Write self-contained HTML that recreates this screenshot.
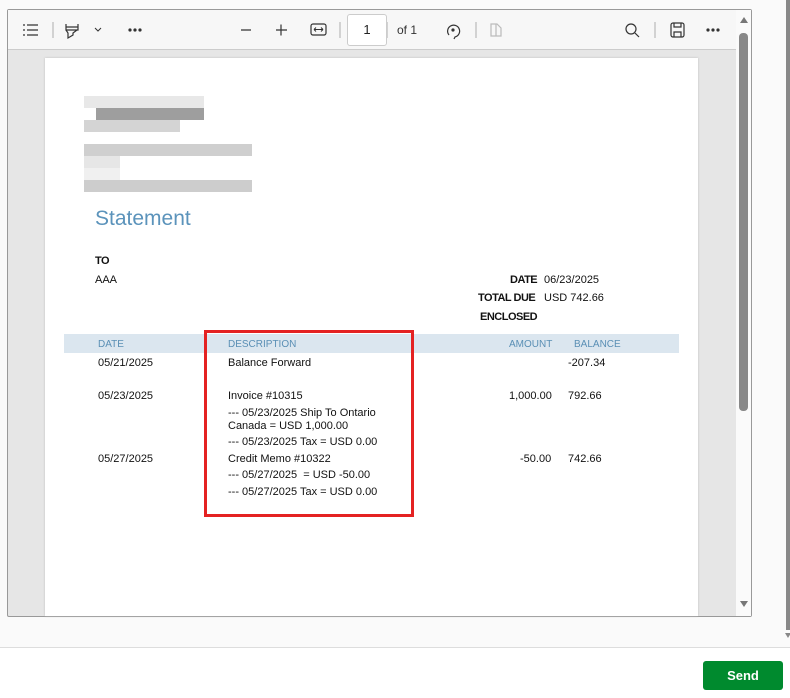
<!DOCTYPE html>
<html><head><meta charset="utf-8"><style>
*{margin:0;padding:0;box-sizing:border-box}
body{width:790px;height:698px;background:#fff;position:relative;overflow:hidden;font-family:"Liberation Sans",Arial,sans-serif}
.a{position:absolute}
.t{position:absolute;font-size:11px;color:#111;white-space:nowrap}
.b{font-weight:bold;letter-spacing:-0.5px}
.h{color:#5a8fb5;font-size:10px}
.px{position:absolute;height:12px}
.ic{position:absolute;color:#333}
</style></head><body>
<div class="a" style="left:0;top:0;width:790px;height:648px;background:#fafafa"></div>
<div class="a" style="left:0;top:647px;width:790px;height:1px;background:#ddd"></div>
<div class="a" style="left:786px;top:0;width:4px;height:630px;background:#888"></div>
<div class="a" style="left:785px;top:633px;width:0;height:0;border-left:3px solid transparent;border-right:3px solid transparent;border-top:5px solid #888"></div>
<!-- viewer frame -->
<div class="a" style="left:7px;top:9px;width:745px;height:608px;border:1px solid #999;background:#e6e6e6;border-radius:2px"></div>
<div class="a" style="left:8px;top:10px;width:728px;height:40px;background:#f7f7f7;border-bottom:1px solid #ccc"></div>
<div class="a" style="left:736px;top:10px;width:15px;height:606px;background:#fafafa"></div>
<div class="a" style="left:739px;top:33px;width:9px;height:378px;background:#888;border-radius:4px"></div>
<div class="a" style="left:740px;top:17px;border-left:4px solid transparent;border-right:4px solid transparent;border-bottom:6px solid #777"></div>
<div class="a" style="left:740px;top:601px;border-left:4px solid transparent;border-right:4px solid transparent;border-top:6px solid #777"></div>
<!-- toolbar -->
<svg class="a" style="left:0;top:10px" width="736" height="40" fill="none" stroke="#333" stroke-width="1.2">
<path d="M23 15h2M27 15h11M23 20h2M27 20h11M23 25h2M27 25h11"/>
<path d="M53 12v16M340 12v16M387 12v16M476 12v16M655 12v16" stroke="#bbb"/>
<path d="M66 14v6h12v-6M66 20l2 3v5l5-3v-2l4-3M66 17h12"/>
<path d="M95 18l3 3 3-3" stroke-width="1"/>
<circle cx="130" cy="20" r="1" fill="#333"/><circle cx="135" cy="20" r="1" fill="#333"/><circle cx="140" cy="20" r="1" fill="#333"/>
<path d="M241 20h10M276 20h11M281 14.5v11"/>
<rect x="311" y="14" width="15" height="11" rx="2"/><path d="M314 19.5h9M314 19.5l2-2M314 19.5l2 2M323 19.5l-2-2M323 19.5l-2 2" stroke-width="1"/>
<path d="M449 25a6 6 0 1 1 6 2l-1 2" /><circle cx="453" cy="20" r="1" fill="#333"/>
<path d="M491 14h6l4 4v8h-10zM496 14v12" stroke="#bbb"/>
<circle cx="631" cy="19" r="5"/><path d="M635 23l4 4"/>
<rect x="671" y="13" width="13" height="14" rx="2"/><path d="M674 13v4h7v-4M674 27v-5h7v5"/>
<circle cx="708" cy="20" r="1" fill="#333"/><circle cx="713" cy="20" r="1" fill="#333"/><circle cx="718" cy="20" r="1" fill="#333"/>
</svg>
<div class="a" style="left:347px;top:14px;width:40px;height:32px;background:#fff;border:1px solid #ccc;border-radius:3px;font-size:13px;text-align:center;line-height:30px;color:#222">1</div>
<div class="t" style="left:397px;top:23px;font-size:12px;color:#333">of 1</div>
<!-- page -->
<div class="a" style="left:45px;top:58px;width:653px;height:558px;background:#fff;box-shadow:0 0 2px #bbb"></div>
<!-- pixelated logo -->
<div class="px" style="left:84px;top:96px;width:120px;background:#e8e8e8"></div>
<div class="px" style="left:96px;top:108px;width:108px;background:#9e9e9e"></div>
<div class="px" style="left:84px;top:120px;width:96px;background:#d4d4d4"></div>
<div class="px" style="left:84px;top:144px;width:168px;background:#cfcfcf"></div>
<div class="px" style="left:84px;top:156px;width:36px;background:#e6e6e6"></div>
<div class="px" style="left:84px;top:168px;width:36px;background:#f0f0f0"></div>
<div class="px" style="left:84px;top:180px;width:168px;background:#cdcdcd"></div>
<div class="t" style="left:95px;top:207px;font-size:21px;color:#5b93bb">Statement</div>
<div class="t b" style="left:95px;top:255px">TO</div>
<div class="t" style="left:95px;top:274px">AAA</div>
<div class="t b" style="left:510px;top:274px">DATE</div><div class="t" style="left:544px;top:274px">06/23/2025</div>
<div class="t b" style="left:478px;top:292px">TOTAL DUE</div><div class="t" style="left:544px;top:292px">USD 742.66</div>
<div class="t b" style="left:480px;top:311px">ENCLOSED</div>
<div class="a" style="left:64px;top:334px;width:615px;height:19px;background:#dbe6ef"></div>
<div class="t h" style="left:98px;top:339px">DATE</div>
<div class="t h" style="left:228px;top:339px">DESCRIPTION</div>
<div class="t h" style="left:509px;top:339px">AMOUNT</div>
<div class="t h" style="left:574px;top:339px">BALANCE</div>
<div class="t" style="left:98px;top:357px">05/21/2025</div>
<div class="t" style="left:228px;top:357px">Balance Forward</div>
<div class="t" style="left:568px;top:357px">-207.34</div>
<div class="t" style="left:98px;top:390px">05/23/2025</div>
<div class="t" style="left:228px;top:390px">Invoice #10315</div>
<div class="t" style="left:509px;top:390px">1,000.00</div>
<div class="t" style="left:568px;top:390px">792.66</div>
<div class="t" style="left:228px;top:407px">--- 05/23/2025 Ship To Ontario</div>
<div class="t" style="left:228px;top:420px">Canada = USD 1,000.00</div>
<div class="t" style="left:228px;top:436px">--- 05/23/2025 Tax = USD 0.00</div>
<div class="t" style="left:98px;top:453px">05/27/2025</div>
<div class="t" style="left:228px;top:453px">Credit Memo #10322</div>
<div class="t" style="left:520px;top:453px">-50.00</div>
<div class="t" style="left:568px;top:453px">742.66</div>
<div class="t" style="left:228px;top:469px">--- 05/27/2025 &nbsp;= USD -50.00</div>
<div class="t" style="left:228px;top:486px">--- 05/27/2025 Tax = USD 0.00</div>
<div class="a" style="left:204px;top:330px;width:210px;height:187px;border:3px solid #e42222"></div>
<!-- send -->
<div class="a" style="left:703px;top:661px;width:80px;height:29px;background:#008a2e;border-radius:3px;color:#fff;font-weight:bold;font-size:13px;text-align:center;line-height:29px">Send</div>
</body></html>
